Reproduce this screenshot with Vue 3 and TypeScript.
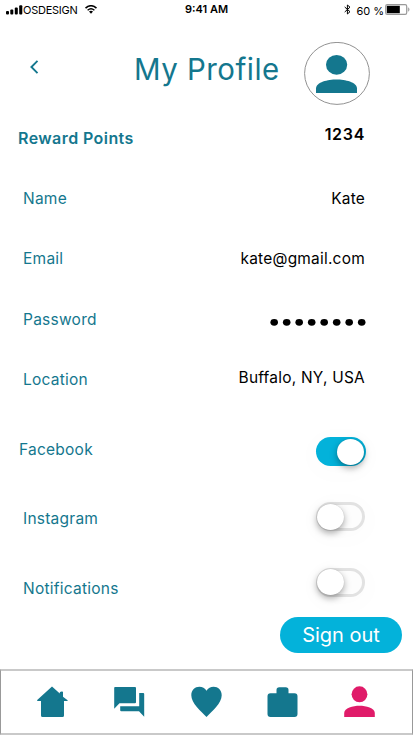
<script setup lang="ts">
import { ref } from 'vue'

interface Field {
  id: string
  label: string
  value: string
}

interface Toggle {
  id: string
  label: string
  on: boolean
}

const fields: Field[] = [
  { id: 'reward', label: 'Reward Points', value: '1234' },
  { id: 'name', label: 'Name', value: 'Kate' },
  { id: 'email', label: 'Email', value: 'kate@gmail.com' },
  { id: 'password', label: 'Password', value: '' },
  { id: 'location', label: 'Location', value: 'Buffalo, NY, USA' },
]

const toggles = ref<Toggle[]>([
  { id: 'facebook', label: 'Facebook', on: true },
  { id: 'instagram', label: 'Instagram', on: false },
  { id: 'notifications', label: 'Notifications', on: false },
])
</script>

<template>
  <main class="screen">
    <div class="status">
      <div class="carrier">
        <svg class="signal" width="17" height="10" viewBox="0 0 17 10">
          <rect x="0" y="6" width="3" height="3.6" rx="1" />
          <rect x="4.3" y="4.6" width="3" height="5" rx="1" />
          <rect x="8.8" y="2.6" width="3" height="7" rx="1" />
          <rect x="13.2" y="0.3" width="3.1" height="9.3" rx="1" />
        </svg>
        <span class="operator">OSDESIGN</span>
        <svg class="wifi" width="12" height="9" viewBox="0 0 12 9" fill="none" stroke="#000">
          <path d="M.5 3.1Q6-1.6 11.5 3.1" stroke-width="1.6" />
          <path d="M2.6 5.2Q6 2.2 9.4 5.2" stroke-width="1.4" />
          <path d="M4 6.6Q6 5 8 6.6L6 8.7Z" fill="#000" stroke="none" />
        </svg>
      </div>
      <span class="clock">9:41 AM</span>
      <div class="power">
        <svg class="bluetooth" width="7" height="11" viewBox="0 0 7 11" fill="none" stroke="#000" stroke-width="1">
          <path d="M.7 3 6 7.7 3.4 10V1L6 3.2.7 8" />
        </svg>
        <span class="percent">60 %</span>
        <svg class="battery" width="25" height="11" viewBox="0 0 25 11">
          <rect x=".7" y=".7" width="21" height="9.6" rx="1.6" fill="#fff" stroke="#999" stroke-width="1.2" />
          <rect x="1.8" y="1.8" width="13" height="7.4" fill="#000" />
          <path d="M22.8 3.2q1.7.4 1.7 2.3t-1.7 2.3z" fill="#aaa" />
        </svg>
      </div>
    </div>

    <header class="header">
      <svg class="back" width="9" height="14" viewBox="0 0 9 14" fill="none" stroke="#14778e" stroke-width="1.900">
        <path d="M7.500.8 1.400 7l6.100 6.200" />
      </svg>
      <h1 class="title">My Profile</h1>
      <svg class="avatar" width="66" height="63" viewBox="0 0 66 63">
        <ellipse cx="33" cy="31.4" rx="32.4" ry="31" fill="#fff" stroke="#929292" />
        <ellipse cx="32.6" cy="22.8" rx="10.6" ry="9.9" fill="#14778e" />
        <path d="M12 51v-4.500C12 40 24 37.400 32.500 37.400S53 40 53 46.500V51z" fill="#14778e" />
      </svg>
    </header>

    <section class="fields">
      <div v-for="f in fields" :key="f.id" class="row" :class="f.id">
        <span class="label">{{ f.label }}</span>
        <span v-if="f.value" class="value">{{ f.value }}</span>
        <svg v-else class="dots" width="96" height="8" viewBox="0 0 96 8">
          <ellipse v-for="n in 8" :key="n" :cx="12.5 * n - 8.3" cy="4.300" rx="3.800" ry="3.400" />
        </svg>
      </div>
    </section>

    <section class="toggles">
      <div v-for="t in toggles" :key="t.id" class="row" :class="t.id">
        <span class="label">{{ t.label }}</span>
        <button class="switch" :class="{ on: t.on }" :aria-label="t.label" @click="t.on = !t.on">
          <span class="knob"></span>
        </button>
      </div>
    </section>

    <button class="signout">Sign out</button>

    <nav class="tabs">
      <svg class="tab" width="31" height="32" viewBox="0 0 31 32">
        <path d="M15 .5 22.800 7.600V6.300q1-1 3.200-.6v5l4.600 3.600v.7H27V29.500q0 1.500-1.500 1.500h-20Q4 31 4 29.500V15H.2v-.9z" />
      </svg>
      <svg class="tab" width="31" height="32" viewBox="0 0 31 32">
        <path d="M1 1h20q1 0 1 1v14.300q0 1-1 1H5.500L.2 22.800V2Q.2 1 1 1zM25.200 7h4q1 0 1 1v22.800L25 25.200H7.200q-1 0-1-1v-3.900h19z" />
      </svg>
      <svg class="tab" width="31" height="32" viewBox="0 0 31 32">
        <path d="M15.500 31C10 25.200.3 17.500.3 9.200.3 4.200 4 .8 8.400.8c2.900 0 5.600 1.400 7.100 3.900C17 2.200 19.700.8 22.600.8c4.400 0 8.100 3.400 8.100 8.400 0 8.300-9.700 16-15.200 21.800z" />
      </svg>
      <svg class="tab" width="31" height="32" viewBox="0 0 31 32">
        <path d="M3.500 7.200h6V4q0-2.800 2.800-2.800h6.400q2.800 0 2.800 2.800v3.200h6q3 0 3 3v17.900q0 3-3 3h-24q-3 0-3-3V10.200q0-3 3-3z" />
      </svg>
      <svg class="tab active" width="31" height="32" viewBox="0 0 31 32">
        <ellipse cx="15.500" cy="8.300" rx="7.900" ry="8" />
        <path d="M.2 31v-4C.2 22 9 19.800 15.500 19.800S30.800 22 30.800 27v4z" />
      </svg>
    </nav>
  </main>
</template>

<style>
body {
  background: #fff;
}
</style>

<style scoped>
* {
  box-sizing: border-box;
}
.screen {
  width: 414px;
  height: 735px;
  display: flex;
  flex-direction: column;
  overflow: hidden;
  background: #fff;
  color: #000;
  font-family: Inter, 'Liberation Sans', sans-serif;
}
svg {
  display: block;
  flex: none;
}
.status {
  height: 20px;
  flex: none;
  display: grid;
  grid-template-columns: 1fr auto 1fr;
  align-items: center;
  padding: 0 4px 0 6px;
  font-size: 11px;
  line-height: 20px;
}
.carrier,
.power {
  height: 20px;
  display: flex;
  align-items: center;
  padding-bottom: 1px;
}
.power {
  justify-content: flex-end;
}
.operator {
  letter-spacing: -0.25px;
}
.wifi {
  margin-left: 7px;
}
.clock {
  margin: -1px 3px 0 0;
  font-weight: 600;
  line-height: 19px;
}
.bluetooth {
  margin-top: -1px;
}
.percent {
  margin: 2px 1px 0 6px;
  letter-spacing: -0.05px;
}
.header {
  height: 88px;
  flex: none;
  display: flex;
  align-items: flex-start;
}
.back {
  margin: 40px 0 0 30px;
}
.title {
  width: 160px;
  margin: 30px 0 0 95px;
  font-size: 30px;
  line-height: 38px;
  font-weight: 400;
  letter-spacing: 0.500px;
  color: #14778e;
  white-space: nowrap;
  transform: scaleX(0.98);
  transform-origin: left;
}
.avatar {
  margin: 22px 0 0 10px;
}
.row {
  height: 60px;
  display: flex;
  align-items: center;
  justify-content: space-between;
  padding: 0 49px 0 23px;
  font-size: 16px;
  line-height: 20px;
  letter-spacing: 0.240px;
  white-space: nowrap;
}
.label {
  color: #14778e;
  transform: scaleX(0.97);
  transform-origin: left;
}
.value {
  transform: scaleX(0.965);
  transform-origin: right;
}
.reward {
  padding-left: 18px;
  font-weight: 600;
  letter-spacing: 0.420px;
}
.reward .label,
.reward .value {
  transform: none;
}
.reward .value {
  margin-top: -8px;
  letter-spacing: 0.700px;
}
.password {
  height: 61px;
  padding-top: 1px;
}
.location .value {
  margin-top: -4px;
}
.dots {
  margin: 6px -1px 0 0;
}
.toggles {
  padding-top: 10px;
}
.facebook {
  padding-left: 19px;
}
.toggles .instagram {
  height: 78px;
}
.toggles .notifications {
  height: 61px;
}
.switch {
  width: 49px;
  height: 29px;
  display: flex;
  align-items: center;
  margin: -3px 0 0;
  padding: 0;
  border: 3px solid #e2e2e2;
  border-radius: 15px;
  background: #fdfdfd;
  box-shadow: 0 4px 22px 8px rgba(0, 0, 0, 0.012);
}
.notifications .switch {
  margin-top: -11px;
}
.switch.on {
  width: 50px;
  justify-content: flex-end;
  margin: 5px -1px 0 0;
  padding-right: 2px;
  border: 0;
  background: #03b2da;
}
.knob {
  width: 27px;
  height: 26px;
  flex: none;
  margin: 0 0 0 -2px;
  border-radius: 50%;
  background: #fff;
  box-shadow: 0 3px 7px rgba(0, 0, 0, 0.35), 0 0 1px rgba(0, 0, 0, 0.2);
}
.signout {
  width: 122px;
  height: 36px;
  flex: none;
  align-self: flex-end;
  margin: -1px 12px 0 0;
  padding: 0;
  border: 0;
  border-radius: 18px;
  background: #03b2da;
  color: #fff;
  font-family: inherit;
  font-size: 20px;
  line-height: 36px;
}
.tabs {
  width: 413px;
  height: 66px;
  flex: none;
  display: flex;
  align-items: center;
  justify-content: space-between;
  margin-top: auto;
  padding: 0 37px 1px 36px;
  border: 1px solid #999;
  border-width: 2px 1px;
  border-color: #c9c9c9 #999;
}
.tab {
  fill: #14778e;
}
.tab.active {
  fill: #e01b69;
}
</style>
